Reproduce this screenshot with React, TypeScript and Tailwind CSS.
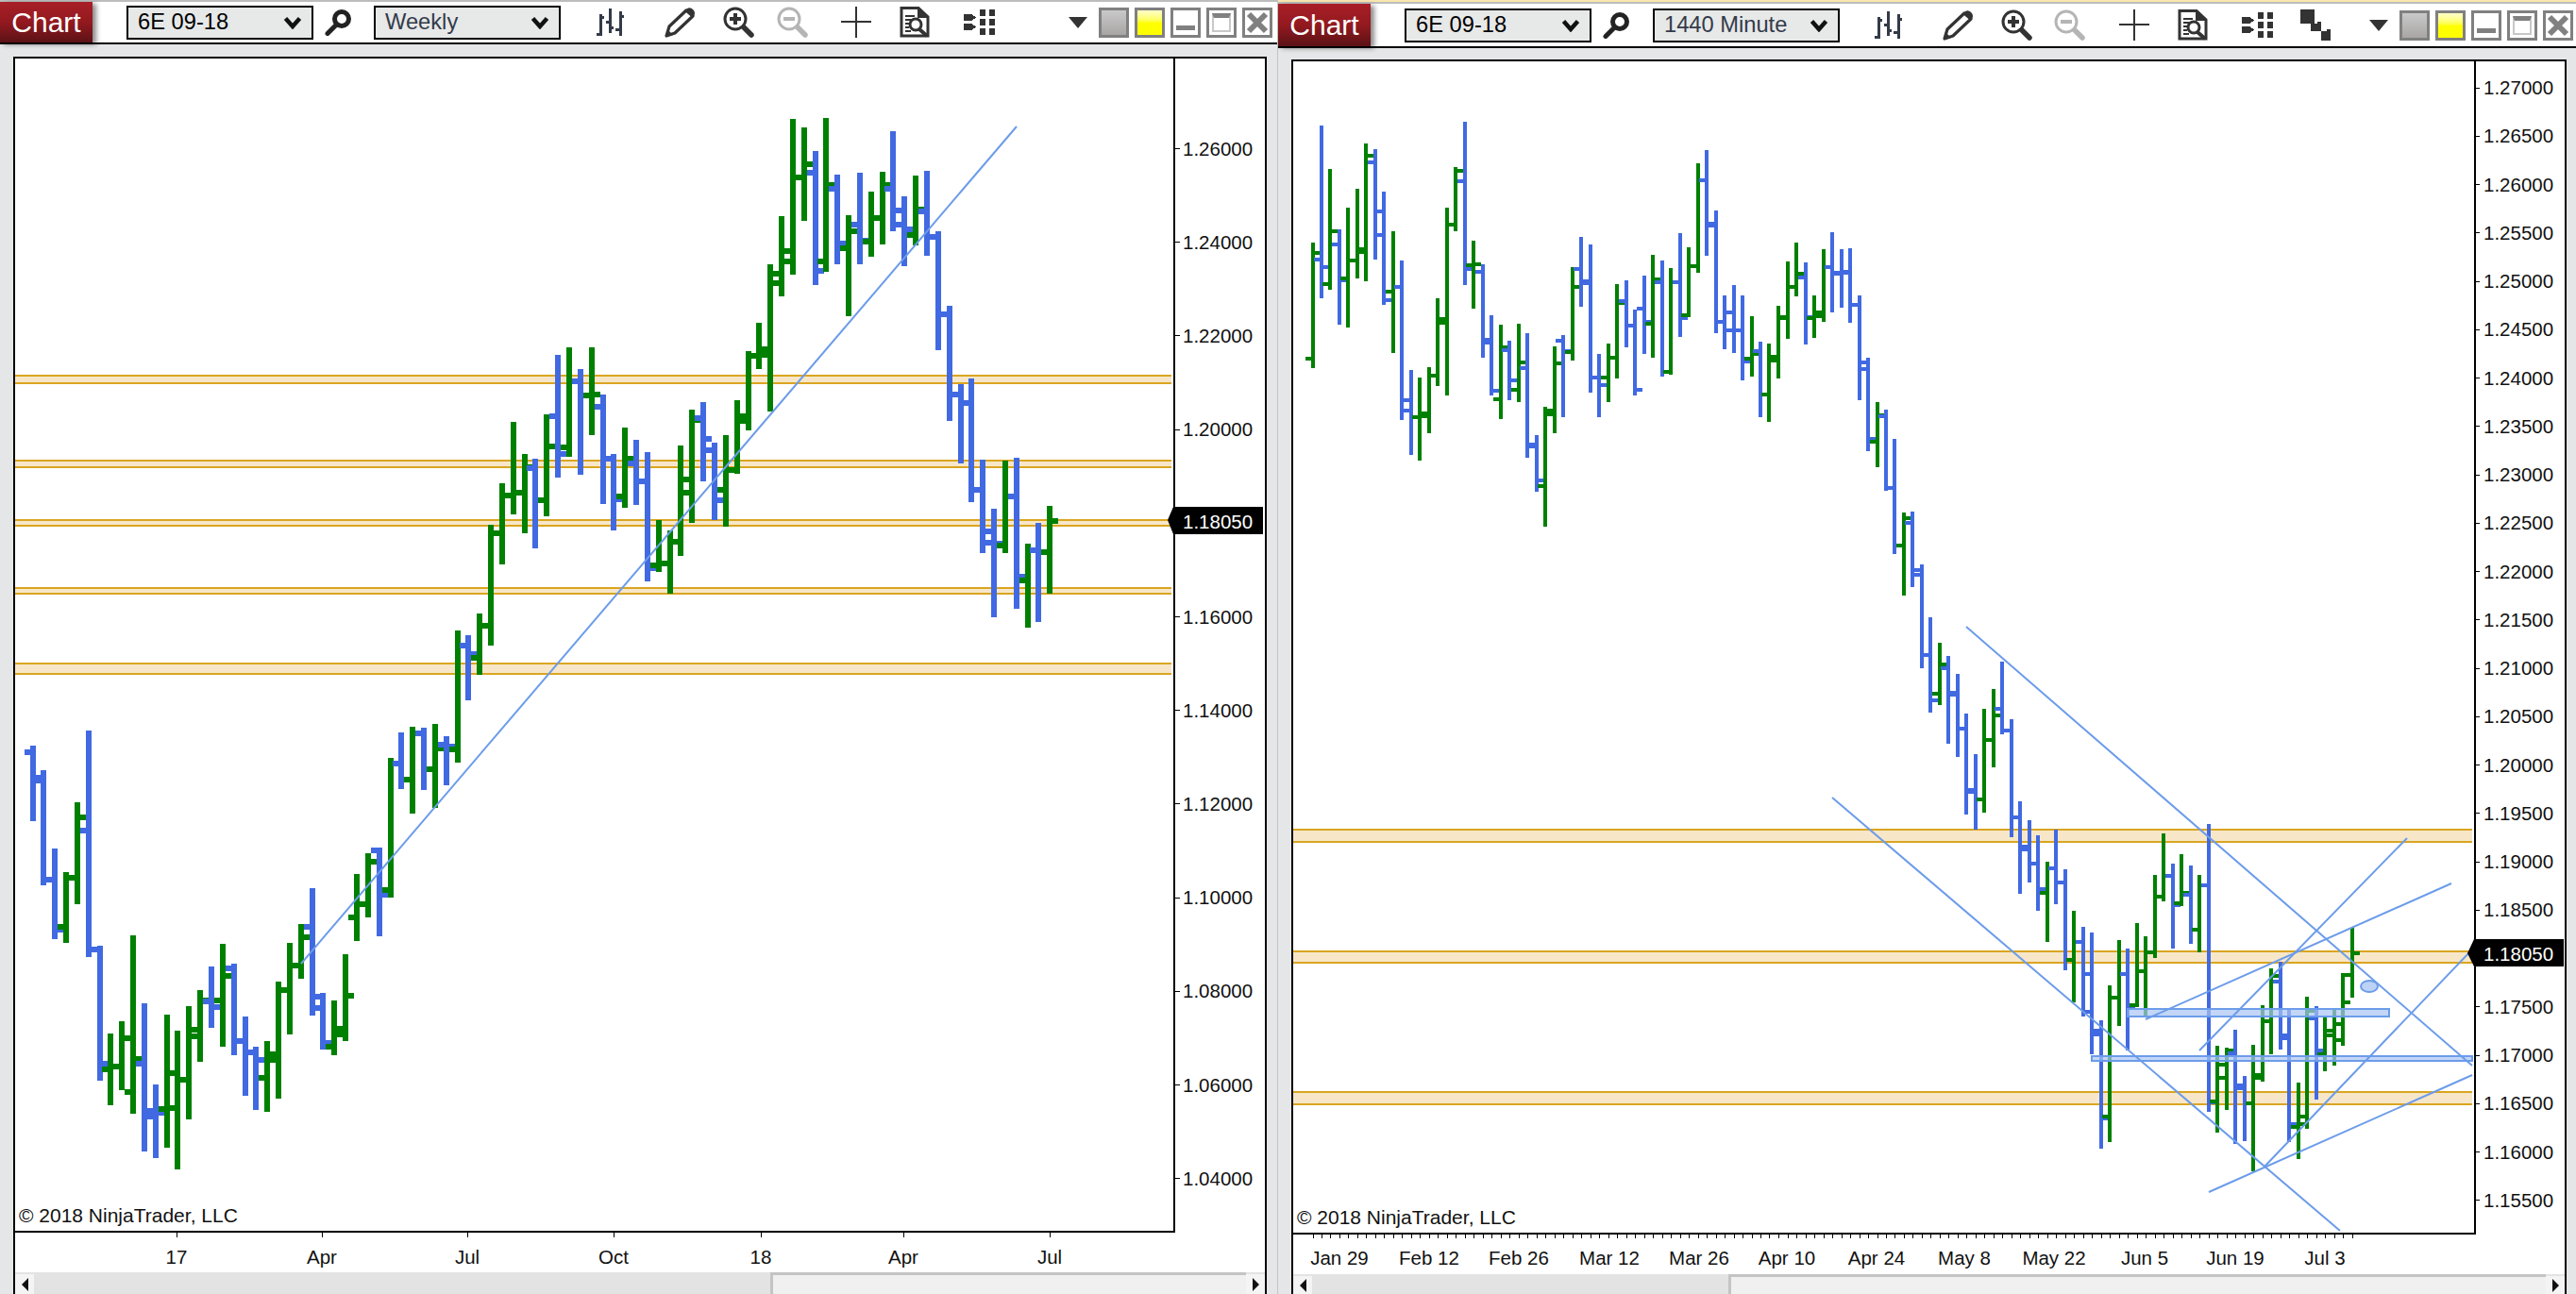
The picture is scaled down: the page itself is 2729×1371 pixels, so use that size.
import React from 'react';

type Bar = { x: number; top: number; bot: number; open: number; close: number };

// rows are [x, high, low, open, close] in traced pixels, turned into page pixels here
const trace = (rows: number[][], x0: number, y0: number, kx: number, ky: number): Bar[] =>
  rows.map(([x, t, b, o, c]) => ({
    x: x0 + x / kx,
    top: y0 + t / ky,
    bot: y0 + b / ky,
    open: y0 + o / ky,
    close: y0 + c / ky,
  }));

const weeklyBars: Bar[] = [
  ...trace([
    [105, 120, 360, 141, 222], [138, 198, 564, 230, 546], [174, 447, 735, 546, 705], [210, 522, 747, 696, 540],
    [246, 300, 624, 540, 348], [282, 72, 792, 390, 768], [318, 756, 1185, 768, 1130], [351, 1035, 1263, 1148, 1139],
    [387, 996, 1215, 1139, 1050], [423, 723, 1290, 1220, 1116], [459, 939, 1410, 1130, 1300], [495, 1197, 1431, 1282, 1287],
    [531, 975, 1398, 1275, 1160], [564, 1026, 1467, 1272, 1182], [600, 948, 1308, 1182, 1045], [636, 897, 1125, 1023, 930],
    [672, 822, 1017, 933, 950], [708, 750, 1077, 930, 852], [744, 813, 1104, 828, 1060], [780, 981, 1233, 1060, 1095],
    [813, 1077, 1278, 1095, 1118], [849, 1059, 1284, 1176, 1100], [885, 870, 1242, 1118, 896], [921, 747, 1038, 896, 818],
    [957, 687, 861, 818, 729], [993, 573, 978, 696, 918], [1026, 906, 1086, 954, 1065], [1062, 930, 1104, 1076, 1020],
    [1098, 783, 1059, 1038, 914], [1134, 528, 741, 666, 624], [1170, 462, 666, 624, 489], [1206, 444, 726, 453, 594],
    [1242, 159, 603, 579, 177], [1275, 78, 258, 177, 228], [1311, 60, 336, 228, 81], [1347, 63, 261, 81, 195],
    [1383, 51, 318, 195, 129], [1419, 90, 246, 117, 123], [1455, -246, 174, 132, -198],
  ], 0, 750, 3, 3),
  ...trace([
    [78, 999, 1206, 1032, 1060], [114, 930, 1125, 1070, 970], [150, 648, 1032, 970, 675], [186, 516, 774, 675, 555],
    [222, 321, 615, 555, 545], [258, 423, 675, 545, 466], [291, 438, 723, 468, 571], [327, 297, 621, 570, 399],
    [363, 108, 498, 303, 422], [399, 84, 432, 402, 193], [435, 153, 489, 193, 236], [471, 84, 363, 236, 234],
    [507, 234, 582, 272, 438], [540, 423, 666, 438, 567], [576, 339, 594, 558, 438], [612, 378, 585, 452, 510],
    [648, 417, 828, 510, 787], [684, 633, 798, 777, 770], [720, 666, 867, 770, 702], [753, 396, 747, 702, 504],
    [789, 282, 642, 546, 316], [825, 258, 510, 309, 375], [861, 387, 633, 411, 569],
  ], 470, 340, 3, 3),
  ...trace([
    [49, 943, 1196, 1095, 1040], [81, 847, 1050, 1040, 890], [113, 712, 930, 905, 725], [141, 632, 760, 725, 705],
    [172, 470, 878, 720, 497], [204, 337, 558, 522, 462], [235, 68, 498, 435, 230], [266, 91, 350, 230, 193],
    [298, 157, 528, 218, 488], [327, 65, 490, 462, 250], [358, 222, 470, 262, 412], [390, 335, 614, 425, 380],
    [421, 217, 470, 360, 405], [452, 269, 449, 408, 342], [483, 214, 416, 342, 250], [512, 102, 378, 262, 322],
    [543, 282, 475, 360, 373], [575, 225, 417, 389, 320], [606, 212, 447, 325, 395], [637, 380, 707, 395, 610],
    [669, 585, 903, 610, 830], [700, 802, 1022, 830, 855], [729, 787, 1128, 855, 1095], [760, 1010, 1270, 1095, 1210],
    [792, 1147, 1448, 1240, 1245], [823, 1014, 1270, 1248, 1112], [854, 1005, 1424, 1112, 1335], [886, 1245, 1476, 1347, 1262],
    [915, 1186, 1460, 1262, 1268], [946, 1140, 1382, 1268, 1181],
  ], 750, 100, 2.613, 2.613),
];

const dailyBars: Bar[] = [
  ...trace([
    [48, 411, 810, 780, 444], [75, 39, 588, 465, 489], [102, 177, 561, 543, 375], [132, 369, 672, 417, 531],
    [159, 300, 681, 525, 468], [189, 240, 525, 468, 432], [216, 96, 534, 441, 135], [246, 114, 465, 156, 387],
    [273, 249, 609, 312, 594], [303, 375, 762, 567, 552], [330, 468, 975, 552, 912], [360, 816, 1086, 945, 966],
    [387, 840, 1104, 966, 955], [417, 807, 1017, 963, 835], [444, 588, 867, 835, 654], [474, 300, 897, 666, 354],
    [501, 171, 375, 354, 183], [531, 27, 546, 216, 495], [558, 405, 621, 483, 480], [588, 480, 777, 504, 720],
    [615, 642, 897, 730, 882], [645, 672, 972, 909, 743], [672, 723, 912, 752, 849], [702, 669, 918, 879, 792],
    [729, 699, 1095, 810, 1059], [759, 1023, 1203, 1053, 1167], [786, 933, 1314, 1185, 957], [816, 741, 1017, 945, 795],
    [843, 705, 966, 723, 756], [873, 489, 786, 759, 552], [900, 393, 615, 495, 534], [930, 417, 888, 540, 840],
    [957, 765, 966, 840, 864], [987, 732, 918, 840, 777], [1014, 543, 843, 777, 603], [1044, 531, 744, 597, 676],
    [1071, 624, 897, 676, 879], [1101, 516, 765, 621, 662], [1128, 450, 777, 669, 527], [1158, 468, 837, 537, 822],
    [1185, 492, 831, 822, 537], [1215, 381, 711, 537, 651], [1242, 426, 648, 642, 485], [1272, 159, 507, 485, 212],
    [1299, 117, 453, 212, 352], [1329, 309, 699, 356, 662], [1356, 579, 750, 662, 690], [1386, 546, 762, 633, 690],
    [1413, 579, 849, 690, 790], [1443, 645, 837, 780, 766], [1470, 726, 966, 756, 894], [1497, 732, 981, 894, 774],
  ], 1375, 120, 3, 3),
  ...trace([
    [72, 184, 335, 297, 210], [102, 92, 253, 208, 145], [129, 53, 165, 145, 118], [159, 94, 265, 125, 208],
    [186, 163, 251, 210, 198], [216, 67, 218, 205, 104], [243, 31, 198, 103, 118], [273, 67, 188, 115, 115],
    [300, 65, 220, 113, 182], [330, 163, 380, 182, 302], [357, 292, 486, 315, 460], [387, 384, 519, 466, 412],
    [414, 400, 568, 414, 563], [441, 461, 700, 563, 682], [471, 613, 786, 683, 625], [498, 612, 768, 636, 733],
    [528, 721, 937, 743, 909], [555, 831, 1029, 909, 1003], [585, 884, 1013, 990, 929], [612, 911, 1094, 936, 988],
    [642, 949, 1121, 992, 1063], [669, 1031, 1241, 1063, 1190], [699, 1115, 1272, 1193, 1210], [726, 1021, 1237, 1210, 1086],
    [756, 980, 1143, 1086, 1035], [783, 923, 1074, 1022, 1066], [813, 1043, 1288, 1066, 1246], [840, 1213, 1405, 1246, 1314],
    [870, 1252, 1382, 1308, 1342], [897, 1284, 1441, 1342, 1395], [927, 1339, 1505, 1403, 1352], [954, 1272, 1427, 1352, 1382],
    [984, 1354, 1564, 1382, 1543], [1011, 1441, 1631, 1543, 1506],
  ], 1860, 230, 3, 1.96),
  ...trace([
    [21, 397, 680, 443, 545], [47, 414, 800, 665, 725], [77, 693, 1100, 737, 1005], [104, 582, 1080, 1000, 622],
    [133, 438, 710, 622, 546], [160, 465, 790, 546, 655], [190, 384, 650, 645, 538], [216, 426, 680, 538, 478],
    [246, 231, 495, 478, 300], [273, 99, 315, 300, 235], [302, 195, 465, 235, 327], [329, 165, 330, 320, 288],
    [359, 201, 450, 295, 405], [385, 231, 477, 405, 263], [415, 69, 984, 263, 955], [442, 774, 1050, 950, 833],
    [471, 780, 978, 875, 790], [498, 723, 1086, 797, 900], [528, 870, 1077, 910, 958], [554, 771, 1173, 958, 868],
    [584, 645, 888, 875, 697], [611, 528, 801, 697, 553], [640, 507, 786, 570, 740], [667, 660, 1080, 750, 1022],
    [696, 891, 1134, 1032, 1022], [723, 618, 1038, 1000, 663], [753, 648, 945, 686, 790], [780, 680, 855, 800, 727],
    [809, 660, 837, 740, 705], [836, 543, 774, 755, 635], [866, 398, 621, 548, 479],
  ], 2200, 850, 2.964, 3),
];

const BLUE = '#4169e1';
const GREEN = '#008000';
const LINE = '#6c9cea';
const GOLD = '#daa520';
const BAND = '#f7e7c8';

function Bars({ data, w, h }: { data: Bar[]; w: number; h: number }) {
  return (
    <g shapeRendering="crispEdges">
      {data.map((b, i) => {
        const color = b.close < b.open ? GREEN : BLUE;
        return (
          <g key={i} fill={color}>
            <rect x={b.x - w / 2} y={b.top} width={w} height={b.bot - b.top} />
            <rect x={b.x - w / 2 - 6} y={b.open - h / 2} width={6} height={h} />
            <rect x={b.x + w / 2} y={b.close - h / 2} width={6} height={h} />
          </g>
        );
      })}
    </g>
  );
}

function Bands({ rows, x1, x2 }: { rows: number[][]; x1: number; x2: number }) {
  return (
    <g shapeRendering="crispEdges">
      {rows.map(([a, b], i) => (
        <g key={i}>
          <rect x={x1} y={a} width={x2 - x1} height={b - a} fill={BAND} />
          <rect x={x1} y={a} width={x2 - x1} height={2} fill={GOLD} />
          <rect x={x1} y={b - 2} width={x2 - x1} height={2} fill={GOLD} />
        </g>
      ))}
    </g>
  );
}

function TrendLines({ rows }: { rows: number[][] }) {
  return (
    <g stroke={LINE} strokeWidth={2}>
      {rows.map(([x1, y1, x2, y2], i) => (
        <line key={i} x1={x1} y1={y1} x2={x2} y2={y2} />
      ))}
    </g>
  );
}

function WeeklyChart() {
  const prices = [1.26, 1.24, 1.22, 1.2, 1.16, 1.14, 1.12, 1.1, 1.08, 1.06, 1.04];
  const months: [string, number][] = [['17', 187], ['Apr', 341], ['Jul', 495], ['Oct', 650], ['18', 806], ['Apr', 957], ['Jul', 1112]];
  return (
    <svg width={1324} height={1286} viewBox="16 62 1324 1286" className="block bg-white">
      <Bands rows={[[397, 407], [487, 496], [550, 558], [622, 630], [702, 715]]} x1={16} x2={1241} />
      <Bars data={weeklyBars} w={6} h={6} />
      <TrendLines rows={[[319, 1021, 1077, 134]]} />
      <g stroke="#000" strokeWidth={2} shapeRendering="crispEdges">
        <line x1={1244} y1={62} x2={1244} y2={1306} />
        <line x1={16} y1={1305} x2={1244} y2={1305} />
        {prices.map(p => {
          const y = Math.round(157 + (1.26 - p) * 4960);
          return <line key={p} x1={1244} y1={y} x2={1250} y2={y} strokeWidth={1} />;
        })}
        {months.map(([m, x]) => (
          <line key={m + x} x1={x} y1={1305} x2={x} y2={1311} strokeWidth={1} />
        ))}
      </g>
      <g fontSize={20.5} fill="#111" dominantBaseline="central">
        {prices.map(p => (
          <text key={p} x={1253} y={157 + (1.26 - p) * 4960}>{p.toFixed(5)}</text>
        ))}
        {months.map(([m, x]) => (
          <text key={m + x} x={x} y={1331} textAnchor="middle">{m}</text>
        ))}
        <text x={20} y={1287} fontSize={21}>© 2018 NinjaTrader, LLC</text>
      </g>
      <polygon points="1237,551 1243,537 1338,537 1338,566 1243,566" fill="#000" />
      <text x={1253} y={552} fontSize={20.5} fill="#fff" dominantBaseline="central">1.18050</text>
    </svg>
  );
}

function DailyChart() {
  const prices = Array.from({ length: 24 }, (_, i) => 1.27 - i * 0.005).filter((_, i) => i !== 18);
  const dates: [string, number][] = [
    ['Jan 29', 1419], ['Feb 12', 1514], ['Feb 26', 1609], ['Mar 12', 1705], ['Mar 26', 1800], ['Apr 10', 1893],
    ['Apr 24', 1988], ['May 8', 2081], ['May 22', 2176], ['Jun 5', 2272], ['Jun 19', 2368], ['Jul 3', 2463],
  ];
  return (
    <svg width={1347} height={1285} viewBox="1370 65 1347 1285" className="block bg-white">
      <Bands rows={[[878, 893], [1007, 1021], [1156, 1171]]} x1={1370} x2={2619} />
      <Bars data={dailyBars} w={4} h={4} />
      <g fill="#a9c5f3" fillOpacity={0.7} stroke={LINE} strokeWidth={2} shapeRendering="crispEdges">
        <rect x={2254} y={1069} width={277} height={8} />
        <rect x={2216} y={1119} width={403} height={5} />
      </g>
      <TrendLines
        rows={[
          [2083, 664, 2619, 1129],
          [1941, 845, 2479, 1304],
          [2330, 1113, 2550, 888],
          [2273, 1080, 2597, 936],
          [2399, 1236, 2619, 1006],
          [2340, 1263, 2619, 1139],
        ]}
      />
      <ellipse cx={2510} cy={1045} rx={9} ry={6} fill="#bcd3f6" stroke={LINE} strokeWidth={2} />
      <g stroke="#000" strokeWidth={2} shapeRendering="crispEdges">
        <line x1={2622} y1={65} x2={2622} y2={1308} />
        <line x1={1370} y1={1307} x2={2622} y2={1307} />
        {prices.map(p => {
          const y = Math.round(92.5 + ((1.27 - p) / 0.005) * 51.25);
          return <line key={p} x1={2622} y1={y} x2={2627} y2={y} strokeWidth={1} />;
        })}
        {dailyBars.map((b, i) => (
          <line key={i} x1={Math.round(b.x)} y1={1307} x2={Math.round(b.x)} y2={1312} strokeWidth={1} />
        ))}
      </g>
      <g fontSize={20.5} fill="#111" dominantBaseline="central">
        {prices.map(p => (
          <text key={p} x={2631} y={92.5 + ((1.27 - p) / 0.005) * 51.25}>{p.toFixed(5)}</text>
        ))}
        {dates.map(([d, x]) => (
          <text key={d} x={x} y={1332} textAnchor="middle">{d}</text>
        ))}
        <text x={1374} y={1289} fontSize={21}>© 2018 NinjaTrader, LLC</text>
      </g>
      <polygon points="2614,1010 2621,995 2716,995 2716,1024 2621,1024" fill="#000" />
      <text x={2631} y={1010} fontSize={20.5} fill="#fff" dominantBaseline="central">1.18050</text>
    </svg>
  );
}

function Combo({ label, className, dim }: { label: string; className: string; dim?: boolean }) {
  return (
    <div className={`flex h-[36px] w-[198px] shrink-0 items-center justify-between border-2 border-black bg-[#e7e8e8] pl-[10px] pr-[10px] text-[23.7px] leading-none ${dim ? 'text-[#333b4a]' : 'text-black'} ${className}`}>
      <span>{label}</span>
      <svg width="20" height="14" viewBox="0 0 20 14">
        <polyline points="2.5,2.5 10,11 17.5,2.5" fill="none" stroke="#111" strokeWidth="4.5" />
      </svg>
    </div>
  );
}

const SearchIcon = ({ className }: { className: string }) => (
  <svg width="29" height="28" viewBox="0 0 29 28" className={`shrink-0 ${className}`}>
    <circle cx="18" cy="10" r="7.5" fill="none" stroke="#222" strokeWidth="5" />
    <line x1="12" y1="16.5" x2="3" y2="25.5" stroke="#222" strokeWidth="5" strokeLinecap="round" />
  </svg>
);

const BarsIcon = ({ className }: { className: string }) => (
  <svg width="29" height="30" viewBox="0 0 29 30" className={`shrink-0 ${className}`} shapeRendering="crispEdges">
    <g fill="#333a48">
      <rect x="3" y="6" width="3" height="23" /><rect x="0" y="26" width="4" height="3" /><rect x="5" y="8" width="3" height="3" />
      <rect x="13" y="0" width="3" height="26" /><rect x="10" y="13" width="4" height="3" /><rect x="15" y="19" width="3" height="3" />
      <rect x="24" y="3" width="3" height="26" /><rect x="20" y="21" width="4" height="3" /><rect x="26" y="7" width="3" height="3" />
    </g>
  </svg>
);

const PencilIcon = ({ className }: { className: string }) => (
  <svg width="33" height="32" viewBox="0 0 33 32" className={`shrink-0 ${className}`}>
    <path d="M2 30 L5 20 L23 3 L30 9 L11 27 Z" fill="none" stroke="#333" strokeWidth="3.2" strokeLinejoin="round" />
    <path d="M24 1 Q28 -1 31 3 Q33 6 31 9 L29 10 L22 4 Z" fill="#333" />
    <path d="M1 31 L3 23 L9 29 Z" fill="#333" />
  </svg>
);

const ZoomIcon = ({ className, color, plus }: { className: string; color: string; plus?: boolean }) => (
  <svg width="33" height="33" viewBox="0 0 33 33" className={`shrink-0 ${className}`}>
    <circle cx="13" cy="13" r="11" fill="none" stroke={color} strokeWidth="3" />
    <rect x="7" y="11" width="12" height="4" fill={color} />
    {plus && <rect x="11" y="7" width="4" height="12" fill={color} />}
    <line x1="22" y1="22" x2="30" y2="30" stroke={color} strokeWidth="5.5" strokeLinecap="round" />
  </svg>
);

const CrossIcon = ({ className }: { className: string }) => (
  <svg width="32" height="33" viewBox="0 0 32 33" className={`shrink-0 ${className}`} shapeRendering="crispEdges">
    <rect x="0" y="15" width="32" height="2" fill="#333" />
    <rect x="15" y="0" width="2" height="33" fill="#333" />
  </svg>
);

const ReportIcon = ({ className }: { className: string }) => (
  <svg width="33" height="33" viewBox="0 0 33 33" className={`shrink-0 ${className}`}>
    <path d="M2 1.5 H20 L30 11 V31 H2 Z" fill="none" stroke="#333" strokeWidth="3" />
    <path d="M19 1 L30 12 H19 Z" fill="#333" />
    <g fill="#333">
      <rect x="6" y="9" width="10" height="2" /><rect x="6" y="13" width="8" height="2" />
      <rect x="6" y="17" width="4" height="2" /><rect x="6" y="21" width="4" height="2" /><rect x="6" y="25" width="6" height="2" />
    </g>
    <circle cx="17" cy="19" r="6" fill="#fff" stroke="#333" strokeWidth="3" />
    <line x1="21" y1="24" x2="29" y2="31" stroke="#333" strokeWidth="4" />
  </svg>
);

const DotsIcon = ({ className }: { className: string }) => (
  <svg width="33" height="27" viewBox="0 0 33 27" className={`shrink-0 ${className}`} shapeRendering="crispEdges">
    <g fill="#333">
      <path d="M0 5 H8 L13 8.5 L8 12 H0 Z" /><path d="M0 15 H8 L13 18.5 L8 22 H0 Z" />
      <rect x="17" y="0" width="6" height="7" /><rect x="27" y="0" width="6" height="7" />
      <rect x="17" y="10" width="6" height="7" /><rect x="27" y="10" width="6" height="7" />
      <rect x="17" y="20" width="6" height="7" /><rect x="27" y="20" width="6" height="7" />
    </g>
  </svg>
);

const TilesIcon = ({ className }: { className: string }) => (
  <svg width="32" height="33" viewBox="0 0 32 33" className={`shrink-0 ${className}`} shapeRendering="crispEdges">
    <g fill="#333">
      <rect x="0" y="0" width="15" height="15" /><rect x="11" y="15" width="11" height="8" /><rect x="18" y="13" width="4" height="4" />
      <rect x="22" y="23" width="10" height="10" /><rect x="28" y="21" width="4" height="4" />
    </g>
  </svg>
);

const MenuArrow = ({ className }: { className: string }) => (
  <svg width="20" height="12" viewBox="0 0 20 12" className={`shrink-0 ${className}`}>
    <polygon points="0,0 20,0 10,12" fill="#333" />
  </svg>
);

function WindowButtons() {
  const box = 'h-[32px] w-[32px] shrink-0 border-[3px] border-[#808080]';
  return (
    <>
      <div className={`${box} ml-[12px] bg-gradient-to-b from-[#c9c9c9] to-[#a9a5a5]`} />
      <div className={`${box} ml-[6px] bg-gradient-to-b from-[#ffffc8] via-[#ffff00] to-[#ffff00]`} />
      <div className={`${box} ml-[6px] flex items-end justify-center bg-white pb-[5px]`}>
        <div className="h-[5px] w-[20px] bg-[#808080]" />
      </div>
      <div className={`${box} ml-[6px] bg-white p-[3px]`}>
        <div className="h-full w-full border-2 border-t-[5px] border-[#808080] border-b-[#c8c8c8] border-x-[#c8c8c8]" />
      </div>
      <div className={`${box} ml-[6px] flex items-center justify-center bg-white`}>
        <svg width="24" height="24" viewBox="0 0 24 24">
          <path d="M3 3 L21 21 M21 3 L3 21" stroke="#808080" strokeWidth="6" />
        </svg>
      </div>
    </>
  );
}

function ChartTab() {
  return (
    <div className="flex h-full w-[98px] shrink-0 items-center justify-center bg-gradient-to-b from-[#a81f27] via-[#93191f] to-[#5b1216] text-[30px] leading-none text-white shadow-[4px_2px_5px_rgba(0,0,0,0.45)]">
      Chart
    </div>
  );
}

function ScrollArrow({ right }: { right?: boolean }) {
  return (
    <div className="mt-[2px] flex w-[20px] shrink-0 items-center justify-center bg-[#f4f4f4]">
      <svg width="7" height="14" viewBox="0 0 7 14">
        <polygon points={right ? '0,0 7,7 0,14' : '7,0 0,7 7,14'} fill="#111" />
      </svg>
    </div>
  );
}

function Scrollbar({ track, thumb }: { track: string; thumb: string }) {
  return (
    <div className="flex flex-1 bg-[#e3e3e3]">
      <ScrollArrow />
      <div className={`shrink-0 ${track}`} />
      <div className={`border-l-[3px] border-t-[3px] border-[#c4c4c4] bg-[#f0f0f0] ${thumb}`} />
      <ScrollArrow right />
    </div>
  );
}

export default function App() {
  return (
    <div className="flex h-[1371px] w-[2729px] overflow-hidden bg-[#e5e6e7] font-['Liberation_Sans',Arial,sans-serif]">
      <div className="flex w-[1354px] shrink-0 flex-col border-r border-r-[#c4c4c4]">
        <div className="h-[2px] bg-[#bdbdbd]" />
        <div className="flex h-[43px] items-center bg-white">
          <ChartTab />
          <Combo label="6E 09-18" className="ml-[36px]" />
          <SearchIcon className="ml-[12px]" />
          <Combo label="Weekly" className="ml-[23px]" dim />
          <BarsIcon className="ml-[38px]" />
          <PencilIcon className="ml-[43px]" />
          <ZoomIcon className="ml-[29px]" color="#333" plus />
          <ZoomIcon className="ml-[24px]" color="#b5b5b5" />
          <CrossIcon className="ml-[35px]" />
          <ReportIcon className="ml-[30px]" />
          <DotsIcon className="ml-[35px]" />
          <MenuArrow className="ml-[78px]" />
          <WindowButtons />
        </div>
        <div className="h-[2px] bg-black" />
        <div className="min-h-0 flex-1 pl-[14px] pr-[11px] pt-[13px]">
          <div className="flex h-full flex-col border-x-2 border-t-2 border-black bg-white">
            <WeeklyChart />
            <Scrollbar track="w-[780px]" thumb="flex-1" />
          </div>
        </div>
      </div>

      <div className="flex min-w-0 flex-1 flex-col">
        <div className="h-[2px] bg-[#f8e6ad]" />
        <div className="h-[2px] bg-[#bdbdbd]" />
        <div className="flex h-[45px] items-center bg-white">
          <ChartTab />
          <Combo label="6E 09-18" className="ml-[36px]" />
          <SearchIcon className="ml-[12px]" />
          <Combo label="1440 Minute" className="ml-[24px]" dim />
          <BarsIcon className="ml-[37px]" />
          <PencilIcon className="ml-[43px]" />
          <ZoomIcon className="ml-[29px]" color="#333" plus />
          <ZoomIcon className="ml-[23px]" color="#b5b5b5" />
          <CrossIcon className="ml-[36px]" />
          <ReportIcon className="ml-[30px]" />
          <DotsIcon className="ml-[35px]" />
          <TilesIcon className="ml-[29px]" />
          <MenuArrow className="ml-[41px]" />
          <WindowButtons />
        </div>
        <div className="h-[2px] bg-black" />
        <div className="min-h-0 flex-1 pl-[14px] pr-[10px] pt-[12px]">
          <div className="flex h-full flex-col border-x-2 border-t-2 border-black bg-white">
            <DailyChart />
            <Scrollbar track="w-[441px]" thumb="flex-1" />
          </div>
        </div>
      </div>
    </div>
  );
}
